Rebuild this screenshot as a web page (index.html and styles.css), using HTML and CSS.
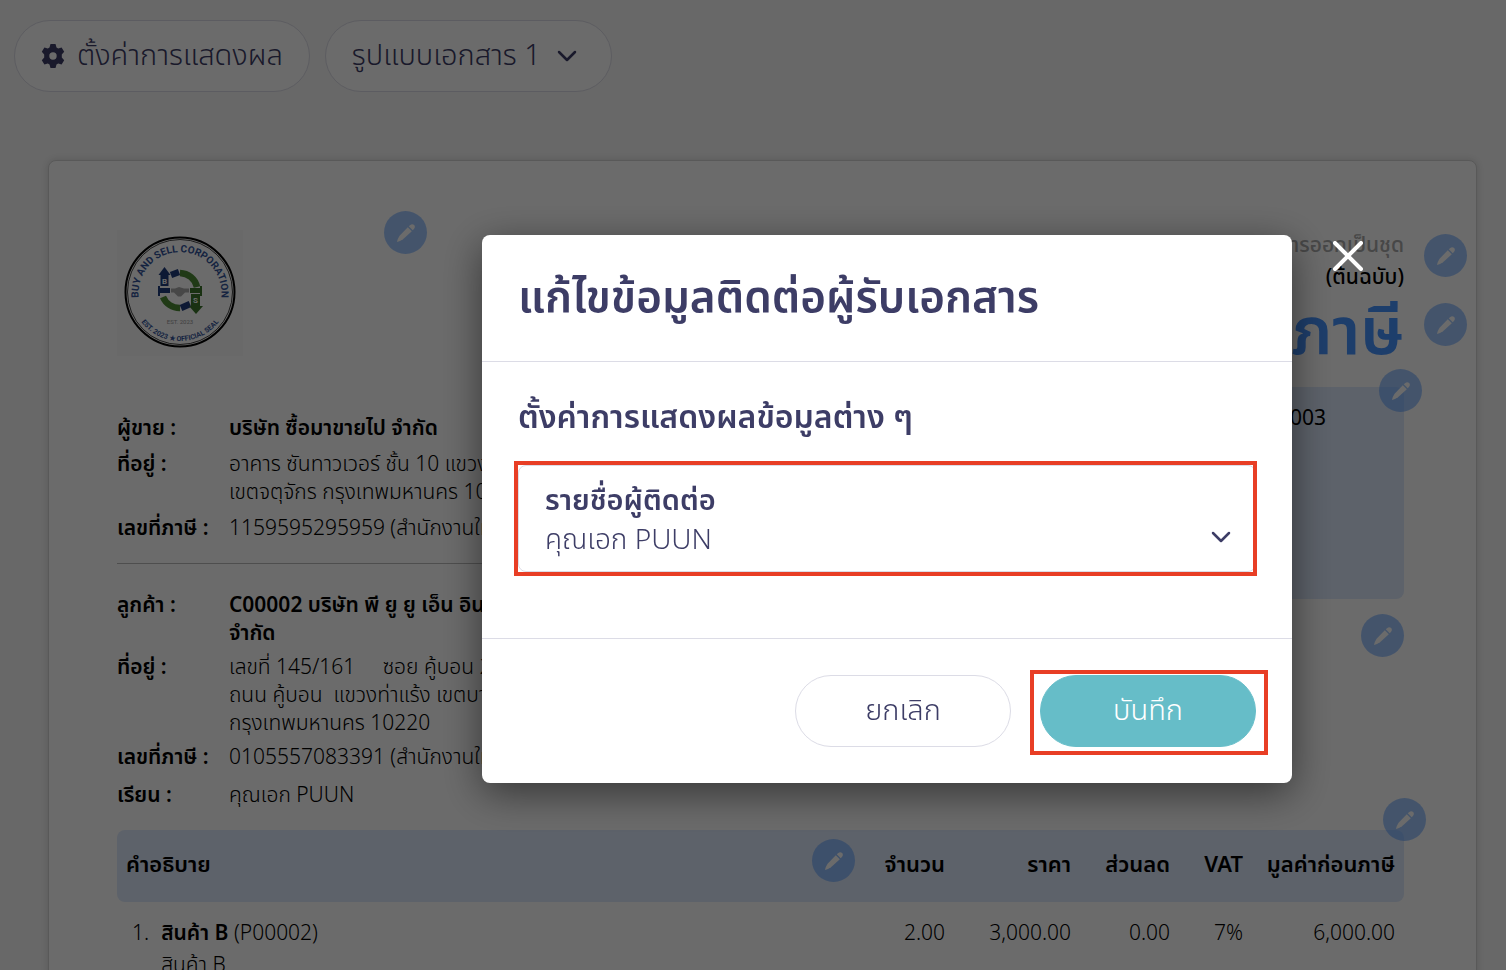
FILE: index.html
```html
<!DOCTYPE html>
<html lang="th">
<head>
<meta charset="utf-8">
<title>แก้ไขข้อมูลติดต่อผู้รับเอกสาร</title>
<link rel="stylesheet" href="styles.css">
</head>
<body>
<svg width="0" height="0" class="sprite" aria-hidden="true">
  <symbol id="pencil" viewBox="0 0 18 18">
    <path d="M10.800 3.200 14.800 7.200 6 15.200Q3 17.500 0 18 .4 15 2.600 11.800Z"/>
    <path d="M11.800 2.300 13.300.9Q15.400-.5 17.100 1.100 18.600 2.800 17.100 4.700L15.700 6.300Z"/>
  </symbol>
</svg>
<main class="page">
  <div class="toolbar">
    <button class="pill" type="button">
      <svg class="gear" viewBox="0 0 24 24" aria-hidden="true"><path fill-rule="evenodd" d="M9.500 0h5l1 3.400 1.700 1 3.400-.9 2.600 4.300-2.400 2.600v3.200l2.400 2.600-2.600 4.300-3.400-.9-1.700 1-1 3.400h-5l-1-3.400-1.700-1-3.400.9L.8 16.200l2.400-2.600v-3.200L.8 7.800l2.600-4.300 3.400.9 1.700-1zM12 8.300a3.700 3.700 0 1 0 0 7.400 3.700 3.700 0 0 0 0-7.400z"/></svg>
      <span>ตั้งค่าการแสดงผล</span>
    </button>
    <button class="pill" type="button">
      <span>รูปแบบเอกสาร 1</span>
      <svg class="chevron chevron-gap" viewBox="0 0 20 12" aria-hidden="true"><path d="M2 2l8 8 8-8"/></svg>
    </button>
  </div>

  <article class="sheet">
    <div class="top">
      <section class="parties">
        <button class="edit edit-logo" type="button" aria-label="แก้ไขโลโก้"><svg><use href="#pencil"/></svg></button>
        <svg class="logo" viewBox="0 0 126 126" role="img" aria-label="Buy and Sell Corporation">
          <rect width="126" height="126" fill="#f9f9f9"/>
          <circle cx="63" cy="62" r="54.500" fill="#fefefe" stroke="#000" stroke-width="2"/>
          <circle cx="63" cy="62" r="52.500" fill="none" stroke="#444" stroke-width="1"/>
          <defs>
            <path id="arcTop" d="M22 70a41.500 41.500 0 1 1 82 0"/>
            <path id="arcBottom" d="M14 62a49 49 0 0 0 98 0"/>
          </defs>
          <text class="seal-text seal-big" text-anchor="middle"><textPath href="#arcTop" startOffset="50%">BUY AND SELL CORPORATION</textPath></text>
          <text class="seal-text seal-small" text-anchor="middle"><textPath href="#arcBottom" startOffset="50%">EST. 2023 ★ OFFICIAL SEAL</textPath></text>
          <g fill="none" stroke-width="6.500">
            <path d="M54 45l8-3" stroke="#1f3c7d"/>
            <path d="M63 43A18 18 0 0 1 80 57" stroke="#4c8a35"/>
            <path d="M46 67A18 18 0 0 0 63 78" stroke="#4c8a35"/>
            <path d="M64 78l9-4" stroke="#1f3c7d"/>
          </g>
          <path fill="#1f3c7d" d="M47.500 37l6 8H51.500v11h-8V45h-2zM41 56h2v2h10v5H43v3h-2z"/>
          <path fill="#3c762c" d="M85 56h-2v2H73v5h10v3h2zM74 64h9v12h3l-7 8-7-8h2z"/>
          <path fill="#aaa" d="M54 58.500h4l4-1.500 5 1.500h5v4h-4l-4 4h-3l-4-4h-3z"/>
          <text class="seal-letter" x="47.500" y="54" text-anchor="middle">B</text>
          <text class="seal-letter" x="78.500" y="73" text-anchor="middle">S</text>
          <text class="seal-est" x="63" y="94" text-anchor="middle">EST. 2023</text>
        </svg>

        <dl class="info seller">
          <dt>ผู้ขาย :</dt><dd class="strong">บริษัท ซื้อมาขายไป จำกัด</dd>
          <dt>ที่อยู่ :</dt><dd>อาคาร ซันทาวเวอร์ ชั้น 10 แขวงจอมพล<br>เขตจตุจักร กรุงเทพมหานคร 10900</dd>
          <dt>เลขที่ภาษี :</dt><dd>1159595295959 (สำนักงานใหญ่)</dd>
        </dl>
        <dl class="info customer">
          <dt>ลูกค้า :</dt><dd class="strong">C00002 บริษัท พี ยู ยู เอ็น อินเทลลิเจนท์<br>จำกัด</dd>
          <dt>ที่อยู่ :</dt><dd>เลขที่ 145/161 &nbsp; &nbsp; ซอย คู้บอน 27<br>ถนน คู้บอน &nbsp;แขวงท่าแร้ง เขตบางเขน<br>กรุงเทพมหานคร 10220</dd>
          <dt>เลขที่ภาษี :</dt><dd>0105557083391 (สำนักงานใหญ่)</dd>
          <dt class="attn">เรียน :</dt><dd class="attn">คุณเอก PUUN</dd>
        </dl>
      </section>

      <section class="summary">
        <div class="copy">
          <p class="muted">เอกสารออกเป็นชุด</p>
          <p>(ต้นฉบับ)</p>
          <button class="edit edit-copy" type="button" aria-label="แก้ไขชุดเอกสาร"><svg><use href="#pencil"/></svg></button>
        </div>
        <div class="title-row">
          <h1 class="doc-title">ใบกำกับภาษี</h1>
          <button class="edit edit-title" type="button" aria-label="แก้ไขชื่อเอกสาร"><svg><use href="#pencil"/></svg></button>
        </div>
        <div class="meta">
          <p>INV0003</p>
          <button class="edit edit-meta" type="button" aria-label="แก้ไขเลขที่เอกสาร"><svg><use href="#pencil"/></svg></button>
          <button class="edit edit-contact" type="button" aria-label="แก้ไขผู้ติดต่อ"><svg><use href="#pencil"/></svg></button>
        </div>
      </section>
    </div>

    <div class="items-wrap">
      <table class="items">
        <thead>
          <tr><th class="desc">คำอธิบาย</th><th class="qty">จำนวน</th><th class="price">ราคา</th><th class="disc">ส่วนลด</th><th class="vat">VAT</th><th class="total">มูลค่าก่อนภาษี</th></tr>
        </thead>
        <tbody>
          <tr><td class="desc"><div class="item"><span class="num">1.</span><span><b>สินค้า B</b> (P00002)<br>สินค้า B</span></div></td><td>2.00</td><td>3,000.00</td><td>0.00</td><td>7%</td><td>6,000.00</td></tr>
        </tbody>
      </table>
      <button class="edit edit-cols" type="button" aria-label="แก้ไขคอลัมน์"><svg><use href="#pencil"/></svg></button>
      <button class="edit edit-table" type="button" aria-label="แก้ไขตาราง"><svg><use href="#pencil"/></svg></button>
    </div>
  </article>
</main>

<div class="overlay">
  <div class="dialog" role="dialog" aria-modal="true" aria-labelledby="dialogTitle">
    <button class="close" type="button" aria-label="ปิด"><svg viewBox="0 0 30 30"><path d="M2 2l26 26M28 2L2 28"/></svg></button>
    <header class="dialog-head"><h2 id="dialogTitle">แก้ไขข้อมูลติดต่อผู้รับเอกสาร</h2></header>
    <div class="dialog-body">
      <h3>ตั้งค่าการแสดงผลข้อมูลต่าง ๆ</h3>
      <div class="field">
        <label for="contact">รายชื่อผู้ติดต่อ</label>
        <select id="contact"><option>คุณเอก PUUN</option></select>
        <svg class="chevron field-chevron" viewBox="0 0 20 12" aria-hidden="true"><path d="M2 2l8 8 8-8"/></svg>
        <span class="mark mark-field"></span>
      </div>
    </div>
    <footer class="dialog-foot">
      <button class="btn" type="button">ยกเลิก</button>
      <div class="save-wrap"><button class="btn btn-save" type="button">บันทึก</button><span class="mark mark-save"></span></div>
    </footer>
  </div>
</div>
</body>
</html>
```
FILE: styles.css
```css
* { box-sizing: border-box; }
body {
  margin: 0;
  background: #f8f8f8;
  color: #000;
  font-family: "Noto Sans Thai", "Noto Sans", "Open Sans", sans-serif;
  font-size: 21px;
  line-height: 28px;
}
h1, h2, h3, p, dl, dd { margin: 0; }
button, select { font: inherit; color: inherit; }
button { cursor: pointer; padding: 0; }
.sprite { position: absolute; }

.page { height: 100vh; overflow: hidden; }
.toolbar { display: flex; gap: 15px; padding: 20px 14px 68px; }
.pill {
  display: flex;
  align-items: center;
  height: 72px;
  padding: 0 26px;
  border: 1px solid #dcdce6;
  border-radius: 36px;
  background: #fff;
  color: #3d3d66;
  font-size: 29px;
  font-weight: 300;
  white-space: nowrap;
}
.gear { width: 24px; height: 24px; margin-right: 12px; fill: #3d3d66; }
.chevron { width: 20px; height: 12px; fill: none; stroke: #3d3d66; stroke-width: 2.500; stroke-linecap: round; stroke-linejoin: round; }
.chevron-gap { margin: 0 8px 0 16px; }

.sheet {
  min-height: 1200px;
  margin: 0 29px 0 48px;
  padding: 69px 72px 0 68px;
  border: 1px solid #d4d4d4;
  border-radius: 8px;
  background: #fff;
  box-shadow: 0 0 8px rgba(0, 0, 0, .15);
}
.top { display: flex; justify-content: space-between; }
.parties { position: relative; width: 50%; white-space: nowrap; }
.logo { display: block; width: 126px; height: 126px; }
.seal-text { font-family: "Liberation Sans Narrow", Roboto, sans-serif; font-weight: 700; fill: #33549a; }
.seal-big { font-size: 10px; }
.seal-small { font-size: 7px; }
.seal-letter { font: 700 8px Roboto, sans-serif; fill: #fff; }
.seal-est { font: 6px Roboto, sans-serif; fill: #999; }

.info { display: grid; grid-template-columns: 112px 1fr; font-weight: 300; }
.info dt, .strong { font-weight: 600; }
.seller { row-gap: 8px; padding: 59px 0 20px; border-bottom: 1px solid #bbb; }
.customer { row-gap: 6px; padding: 28px 0 20px; }
.attn { margin-top: 4px; }

.summary { width: 40%; text-align: right; white-space: nowrap; }
.copy { position: relative; font-size: 21px; line-height: 32px; font-weight: 500; }
.muted { color: #aaa; }
.title-row { position: relative; padding-bottom: 13px; }
.doc-title { color: #4794ff; font-size: 66px; font-weight: 600; line-height: 80px; }
.meta { position: relative; height: 212px; padding: 18px 78px 0 0; border-radius: 8px; background: #dde9fc; }

.edit {
  position: absolute;
  display: flex;
  align-items: center;
  justify-content: center;
  width: 43px;
  height: 43px;
  border: 0;
  border-radius: 50%;
  background: rgba(71, 148, 255, .5);
}
.edit svg { width: 18px; height: 18px; fill: #fff; overflow: visible; }
.edit-logo { left: 267px; top: -19px; }
.edit-copy { right: -63px; top: 4px; }
.edit-title { right: -63px; top: 9px; }
.edit-meta { right: -18px; top: -18px; }
.edit-contact { right: 0; top: 227px; }
.edit-cols { right: 549px; top: 9px; }
.edit-table { right: -22px; top: -32px; }

.items-wrap { position: relative; }
.items { width: 100%; border-collapse: separate; border-spacing: 0; table-layout: fixed; }
.items th { height: 72px; padding: 0 9px; background: #dde9fc; font-size: 22px; font-weight: 600; text-align: right; white-space: nowrap; }
.items th:first-child { border-radius: 8px 0 0 8px; }
.items th:last-child { border-radius: 0 8px 8px 0; }
.items td { padding: 16px 9px; font-weight: 300; text-align: right; vertical-align: top; line-height: 32px; }
.items .desc { text-align: left; }
.items b { font-weight: 600; }
.qty, .price { width: 126px; }
.disc { width: 99px; }
.vat { width: 73px; }
.total { width: 152px; }
.item { display: flex; gap: 12px; padding-left: 6px; }

.overlay {
  position: fixed;
  inset: 0;
  display: flex;
  align-items: flex-start;
  justify-content: flex-end;
  padding: 235px 214px 0 0;
  background: rgba(0, 0, 0, .58);
  color: #3d3d66;
}
.dialog {
  position: relative;
  width: 810px;
  max-width: 100%;
  border-radius: 8px;
  background: #fff;
  box-shadow: 0 10px 40px rgba(0, 0, 0, .5);
}
.close { position: absolute; top: 6px; right: -71px; width: 30px; height: 30px; border: 0; background: none; }
.close svg { display: block; width: 30px; height: 30px; stroke: #fff; stroke-width: 4; stroke-linecap: round; }
.dialog-head { padding: 34px 36px 32px; border-bottom: 1px solid #dcdce6; }
.dialog-head h2 { font-size: 44px; line-height: 60px; font-weight: 600; white-space: nowrap; }
.dialog-body { padding: 36px 36px 66px; border-bottom: 1px solid #dcdce6; }
.dialog-body h3 { margin-bottom: 27px; font-size: 32px; line-height: 40px; font-weight: 600; white-space: nowrap; }
.field { position: relative; padding: 15px 26px 10px; border: 1px solid #dcdce6; border-radius: 8px; }
.field label { display: block; font-size: 29px; line-height: 40px; font-weight: 600; }
.field select { display: block; width: 100%; height: 40px; padding: 0; border: 0; background: none; appearance: none; font-size: 28px; line-height: 40px; font-weight: 300; }
.field-chevron { position: absolute; right: 24px; bottom: 28px; pointer-events: none; }
.mark { position: absolute; border: 4px solid #e83e25; pointer-events: none; }
.mark-field { inset: -5px -2px -5px -5px; }
.dialog-foot { display: flex; justify-content: flex-end; gap: 29px; padding: 36px; }
.save-wrap { position: relative; }
.btn { width: 216px; height: 72px; border: 1px solid #dcdce6; border-radius: 36px; background: #fff; font-size: 29px; font-weight: 300; }
.btn-save { border-color: #66bdc8; background: #66bdc8; color: #fff; }
.mark-save { inset: -5px -12px -8px -10px; }
```
